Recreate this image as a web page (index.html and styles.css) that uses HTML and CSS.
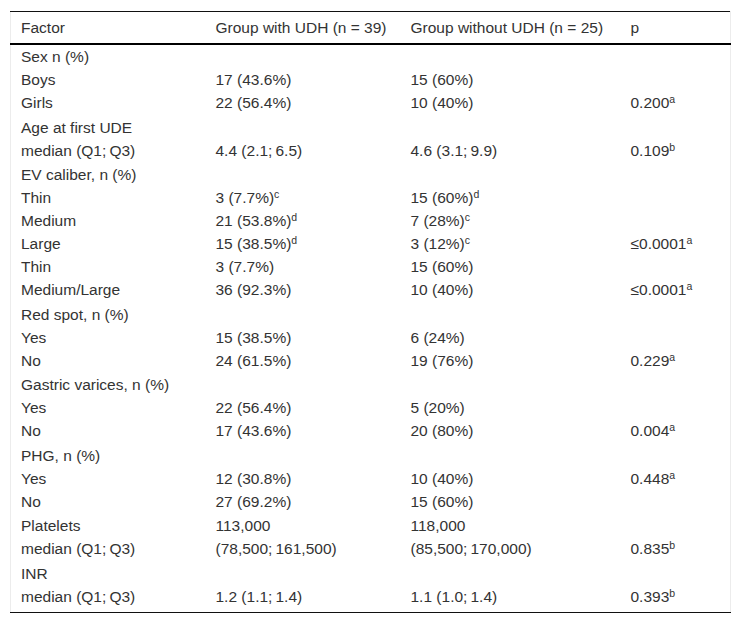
FILE: index.html
```html
<!DOCTYPE html>
<html>
<head>
<meta charset="utf-8">
<link rel="stylesheet" href="styles.css">
</head>
<body>
<div class="wrap">
<table class="tbl">
<colgroup><col class="c1"><col class="c2"><col class="c3"><col class="c4"></colgroup>
<thead>
<tr><th>Factor</th><th>Group with UDH (n = 39)</th><th>Group without UDH (n = 25)</th><th>p</th></tr>
</thead>
<tbody>
<tr><td>Sex n (%)</td><td></td><td></td><td></td></tr>
<tr><td>Boys</td><td>17 (43.6%)</td><td>15 (60%)</td><td></td></tr>
<tr class="end"><td>Girls</td><td>22 (56.4%)</td><td>10 (40%)</td><td>0.200<sup>a</sup></td></tr>
<tr><td>Age at first UDE</td><td></td><td></td><td></td></tr>
<tr class="end"><td>median (Q1;&#8201;Q3)</td><td>4.4 (2.1;&#8201;6.5)</td><td>4.6 (3.1;&#8201;9.9)</td><td>0.109<sup>b</sup></td></tr>
<tr><td>EV caliber, n (%)</td><td></td><td></td><td></td></tr>
<tr><td>Thin</td><td>3 (7.7%)<sup>c</sup></td><td>15 (60%)<sup>d</sup></td><td></td></tr>
<tr><td>Medium</td><td>21 (53.8%)<sup>d</sup></td><td>7 (28%)<sup>c</sup></td><td></td></tr>
<tr><td>Large</td><td>15 (38.5%)<sup>d</sup></td><td>3 (12%)<sup>c</sup></td><td>&le;0.0001<sup>a</sup></td></tr>
<tr><td>Thin</td><td>3 (7.7%)</td><td>15 (60%)</td><td></td></tr>
<tr class="end"><td>Medium/Large</td><td>36 (92.3%)</td><td>10 (40%)</td><td>&le;0.0001<sup>a</sup></td></tr>
<tr><td>Red spot, n (%)</td><td></td><td></td><td></td></tr>
<tr><td>Yes</td><td>15 (38.5%)</td><td>6 (24%)</td><td></td></tr>
<tr class="end"><td>No</td><td>24 (61.5%)</td><td>19 (76%)</td><td>0.229<sup>a</sup></td></tr>
<tr><td>Gastric varices, n (%)</td><td></td><td></td><td></td></tr>
<tr><td>Yes</td><td>22 (56.4%)</td><td>5 (20%)</td><td></td></tr>
<tr class="end"><td>No</td><td>17 (43.6%)</td><td>20 (80%)</td><td>0.004<sup>a</sup></td></tr>
<tr><td>PHG, n (%)</td><td></td><td></td><td></td></tr>
<tr><td>Yes</td><td>12 (30.8%)</td><td>10 (40%)</td><td>0.448<sup>a</sup></td></tr>
<tr class="end"><td>No</td><td>27 (69.2%)</td><td>15 (60%)</td><td></td></tr>
<tr><td>Platelets</td><td>113,000</td><td>118,000</td><td></td></tr>
<tr class="end"><td>median (Q1;&#8201;Q3)</td><td>(78,500;&#8201;161,500)</td><td>(85,500;&#8201;170,000)</td><td>0.835<sup>b</sup></td></tr>
<tr><td>INR</td><td></td><td></td><td></td></tr>
<tr class="last"><td>median (Q1;&#8201;Q3)</td><td>1.2 (1.1;&#8201;1.4)</td><td>1.1 (1.0;&#8201;1.4)</td><td>0.393<sup>b</sup></td></tr>
</tbody>
</table>
</div>
</body>
</html>
```
FILE: styles.css
```css
html, body {
  margin: 0;
  padding: 0;
  background: #fff;
}
.wrap {
  padding: 11px 10px 0 10px;
}
.tbl {
  width: 720px;
  table-layout: fixed;
  border-collapse: collapse;
  font-family: "Liberation Sans", Arial, sans-serif;
  font-size: 15.5px;
  color: #333;
  border-left: 1px solid #ececec;
  border-right: 1px solid #ececec;
  border-top: 1px solid #111;
  border-bottom: 1px solid #111;
}
.tbl thead tr {
  border-bottom: 2px solid #000;
}
.tbl th {
  font-weight: normal;
  text-align: left;
  height: 31px;
  padding: 0 10px;
  vertical-align: middle;
  white-space: nowrap;
}
.tbl td {
  height: 23px;
  padding: 0 10px;
  vertical-align: middle;
  line-height: 17px;
  white-space: nowrap;
}
.tbl tr.end td {
  height: 24.5px;
  vertical-align: top;
  padding-top: 3px;
  box-sizing: border-box;
}
.tbl tr.last td {
  height: 28px;
  vertical-align: top;
  padding-top: 3px;
  box-sizing: border-box;
}
.c1 { width: 195px; }
.c2 { width: 195px; }
.c3 { width: 220px; }
.c4 { width: 110px; }
sup {
  font-size: 10.5px;
  line-height: 0;
  vertical-align: 5px;
}
```
